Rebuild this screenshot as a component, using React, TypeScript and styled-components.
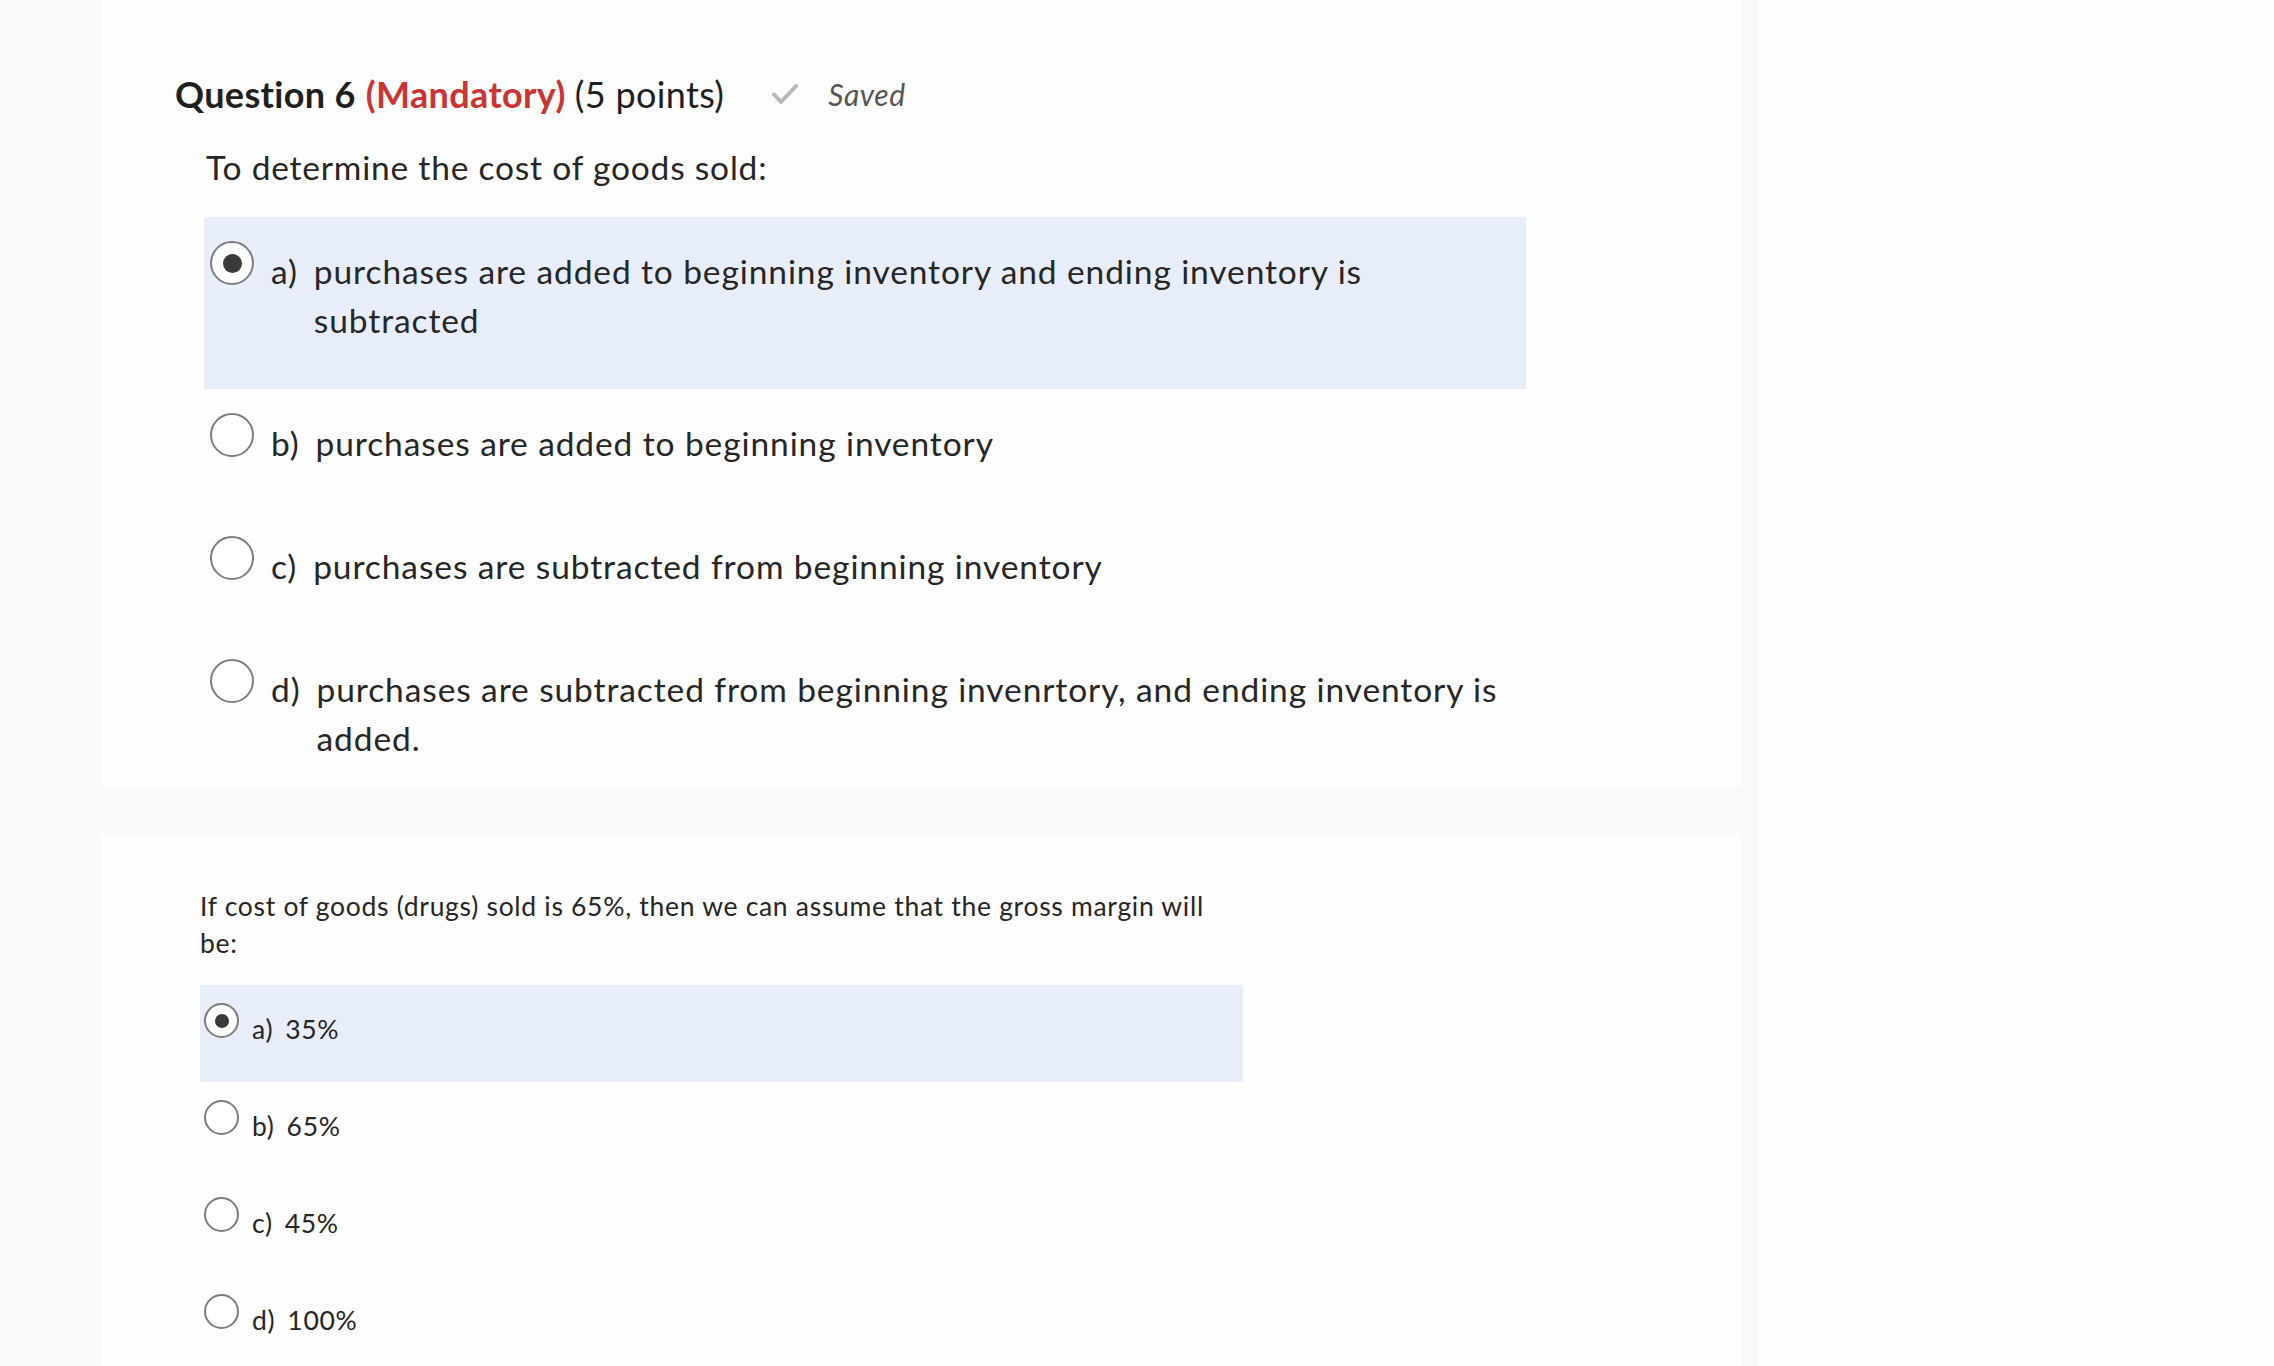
import styled, { createGlobalStyle, css } from "styled-components";

type Size = "lg" | "sm";

type Option = {
  key: string;
  text: string;
  selected?: boolean;
};

const GlobalStyle = createGlobalStyle`
  body {
    margin: 0;
    background: #fefefe;
    font-family: Lato, "Open Sans", sans-serif;
    color: #262626;
  }
`;

const Page = styled.div`
  display: flex;
  height: 100vh;
  overflow: hidden;
`;

const Column = styled.main`
  box-sizing: border-box;
  width: 1757px;
  flex-shrink: 0;
  background: #f9f9f9;
  padding: 0 16px 0 101px;
  display: flex;
  flex-direction: column;
  gap: 47px;
`;

const Card = styled.section<{ $pad: string; $fill?: boolean }>`
  background: #fdfdfd;
  padding: ${(p) => p.$pad};
  flex: ${(p) => (p.$fill ? "1 0 auto" : "0 0 auto")};
`;

const QuestionHeader = styled.h2`
  margin: 0;
  display: flex;
  align-items: center;
  font-size: 36px;
  line-height: 44px;
  font-weight: 400;
  letter-spacing: 0.35px;
  color: #1f1f1f;
`;

const Title = styled.span`
  font-weight: 700;
`;

const Mandatory = styled.span`
  font-weight: 700;
  color: #cc3434;
  margin: 0 9px 0 10px;
`;

const SavedState = styled.span`
  display: inline-flex;
  align-items: center;
  gap: 30px;
  margin-left: 48px;
  font-size: 30px;
  font-style: italic;
  letter-spacing: 0.5px;
  color: #555;
`;

const Body = styled.div`
  margin: 27px 0 0 29px;
  width: 1322px;
`;

const Prompt = styled.p<{ $size: Size }>`
  margin: 0;
  ${(p) =>
    p.$size === "lg"
      ? css`
          padding-left: 2px;
          font-size: 33.5px;
          letter-spacing: 0.8px;
          line-height: 48px;
          margin-bottom: 26px;
        `
      : css`
          width: 1010px;
          font-size: 26.5px;
          letter-spacing: 0.7px;
          line-height: 37px;
          margin-bottom: 23px;
        `}
`;

const OptionList = styled.div<{ $size: Size }>`
  display: flex;
  flex-direction: column;
  width: ${(p) => (p.$size === "lg" ? "1322px" : "1043px")};
`;

const OptionRow = styled.label<{ $selected?: boolean; $size: Size }>`
  display: flex;
  align-items: flex-start;
  background: ${(p) => (p.$selected ? "#e8eef9" : "transparent")};
  ${(p) =>
    p.$size === "lg"
      ? css`
          padding: 24px 10px 44px 6px;
          gap: 17px;
          font-size: 33.5px;
          letter-spacing: 0.9px;
          line-height: 49px;
          &:last-child {
            padding-bottom: 24px;
          }
        `
      : css`
          padding: 18px 0 34px 4px;
          gap: 13px;
          font-size: 26.5px;
          letter-spacing: 0.7px;
          line-height: 37px;
        `}
`;

const Radio = styled.span<{ $checked?: boolean; $size: Size }>`
  box-sizing: border-box;
  flex-shrink: 0;
  width: ${(p) => (p.$size === "lg" ? "44px" : "35px")};
  height: ${(p) => (p.$size === "lg" ? "44px" : "35px")};
  border-radius: 50%;
  border: 2px solid #7d7d7d;
  background: #fff;
  display: flex;
  align-items: center;
  justify-content: center;

  &::after {
    content: "";
    display: ${(p) => (p.$checked ? "block" : "none")};
    width: ${(p) => (p.$size === "lg" ? "19px" : "14px")};
    height: ${(p) => (p.$size === "lg" ? "19px" : "14px")};
    border-radius: 50%;
    background: #3a3a3a;
  }
`;

const OptionBody = styled.span<{ $size: Size }>`
  display: flex;
  margin-top: ${(p) => (p.$size === "lg" ? "6px" : "8px")};
`;

const Letter = styled.span<{ $size: Size }>`
  flex-shrink: 0;
  margin-right: ${(p) => (p.$size === "lg" ? "16px" : "12px")};
`;

const OptionText = styled.span`
  flex: 1;
`;

function CheckIcon() {
  return (
    <svg width="26" height="22" viewBox="0 0 26 22" fill="none">
      <path
        d="M2 11.5 L9 19 L24 3"
        stroke="#b4b9bf"
        strokeWidth="4"
        strokeLinecap="round"
        strokeLinejoin="round"
      />
    </svg>
  );
}

function Options({ items, size }: { items: Option[]; size: Size }) {
  return (
    <OptionList $size={size}>
      {items.map((o) => (
        <OptionRow key={o.key} $selected={o.selected} $size={size}>
          <Radio $checked={o.selected} $size={size} />
          <OptionBody $size={size}>
            <Letter $size={size}>{o.key})</Letter>
            <OptionText>{o.text}</OptionText>
          </OptionBody>
        </OptionRow>
      ))}
    </OptionList>
  );
}

const question6: Option[] = [
  { key: "a", text: "purchases are added to beginning inventory and ending inventory is subtracted", selected: true },
  { key: "b", text: "purchases are added to beginning inventory" },
  { key: "c", text: "purchases are subtracted from beginning inventory" },
  { key: "d", text: "purchases are subtracted from beginning invenrtory, and ending inventory is added." },
];

const question7: Option[] = [
  { key: "a", text: "35%", selected: true },
  { key: "b", text: "65%" },
  { key: "c", text: "45%" },
  { key: "d", text: "100%" },
];

export default function App(): JSX.Element {
  return (
    <>
      <GlobalStyle />
      <Page>
        <Column>
          <Card $pad="72px 0 0 74px">
            <QuestionHeader>
              <Title>Question 6</Title>
              <Mandatory>(Mandatory)</Mandatory>
              (5 points)
              <SavedState>
                <CheckIcon />
                Saved
              </SavedState>
            </QuestionHeader>
            <Body>
              <Prompt $size="lg">To determine the cost of goods sold:</Prompt>
              <Options items={question6} size="lg" />
            </Body>
          </Card>
          <Card $pad="54px 0 40px 99px" $fill>
            <Prompt $size="sm">
              If cost of goods (drugs) sold is 65%, then we can assume that the gross margin will be:
            </Prompt>
            <Options items={question7} size="sm" />
          </Card>
        </Column>
      </Page>
    </>
  );
}
